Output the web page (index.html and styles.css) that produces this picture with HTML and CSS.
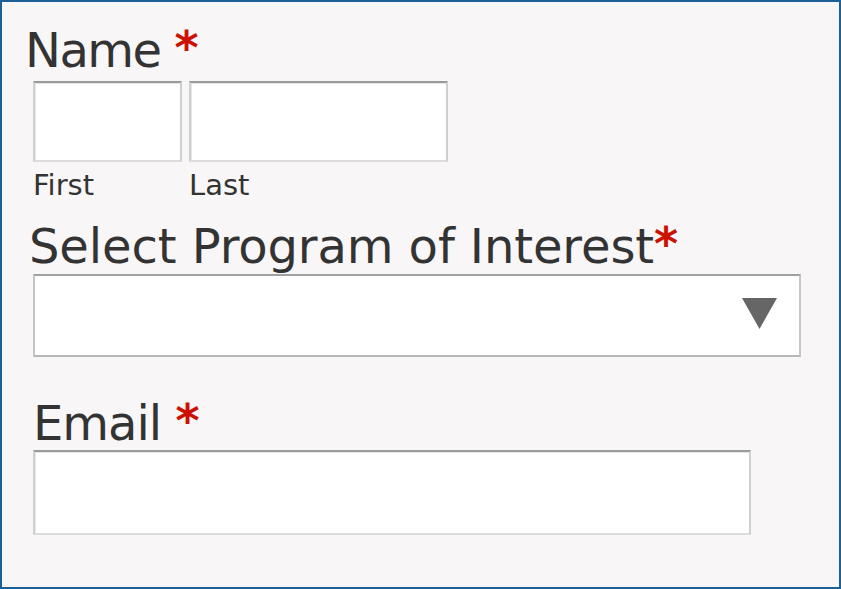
FILE: index.html
```html
<!DOCTYPE html>
<html lang="en">
<head>
<meta charset="utf-8">
<title>Form</title>
<link rel="stylesheet" href="styles.css">
</head>
<body>
<form class="form">
  <div class="field field-name">
    <div class="label label-name">Name <span class="req">*</span></div>
    <div class="name-row">
      <div class="name-part">
        <input class="input input-first" type="text">
        <span class="sub-label">First</span>
      </div>
      <div class="name-part">
        <input class="input input-last" type="text">
        <span class="sub-label">Last</span>
      </div>
    </div>
  </div>
  <div class="field field-program">
    <div class="label label-program">Select Program of Interest<span class="req">*</span></div>
    <div class="select" role="combobox">
      <svg class="caret" width="35" height="31" viewBox="0 0 35 31"><polygon points="0,0 35,0 17.5,31" fill="#666"/></svg>
    </div>
  </div>
  <div class="field field-email">
    <div class="label label-email">Email <span class="req">*</span></div>
    <input class="input input-email" type="text">
  </div>
</form>
</body>
</html>
```

FILE: styles.css
```css
html, body {
  margin: 0;
  padding: 0;
}
body {
  width: 841px;
  height: 589px;
  font-family: "DejaVu Sans", sans-serif;
  color: #333;
}
.form {
  box-sizing: border-box;
  width: 841px;
  height: 589px;
  border: 2px solid #1b6198;
  background: #f8f6f7;
  padding: 24px 0 0 31px;
  display: flex;
  flex-direction: column;
}
.label {
  font-size: 48px;
  line-height: 48px;
  white-space: nowrap;
}
.req {
  color: #cc1100;
  font-size: 46px;
  font-weight: bold;
  line-height: 0;
  letter-spacing: 0;
  vertical-align: 3px;
}
.label-name {
  margin-left: -8px;
  letter-spacing: -1.5px;
}
.name-row {
  display: flex;
  gap: 7px;
  margin-top: 7px;
}
.name-part {
  display: flex;
  flex-direction: column;
}
.input {
  box-sizing: border-box;
  display: block;
  margin: 0;
  padding: 0;
  background: #fff;
  border: 2px solid #cfcfcf;
  border-top-color: #9a9a9a;
  border-bottom-color: #dcdcdc;
  box-shadow: inset 1px 1px 0 #e6e6e6;
  outline: none;
}
.input-first {
  width: 149px;
  height: 81px;
}
.input-last {
  width: 259px;
  height: 81px;
}
.sub-label {
  font-size: 29px;
  line-height: 29px;
  margin-top: 9px;
}
.field-program {
  margin-top: 22px;
}
.label-program {
  margin-left: -4px;
  letter-spacing: -0.1px;
}
.select {
  box-sizing: border-box;
  width: 768px;
  height: 83px;
  margin-top: 4px;
  background: #fff;
  border: 2px solid #c6c6c6;
  border-top-color: #a0a0a0;
  border-bottom-color: #b8b8b8;
  display: flex;
  align-items: center;
  justify-content: flex-end;
  padding: 0 22px 5px 0;
}
.caret {
  display: block;
}
.field-email {
  margin-top: 42px;
}
.label-email {
  margin-left: 0;
  letter-spacing: -1px;
}
.input-email {
  width: 718px;
  height: 85px;
  margin-top: 3px;
}
```
